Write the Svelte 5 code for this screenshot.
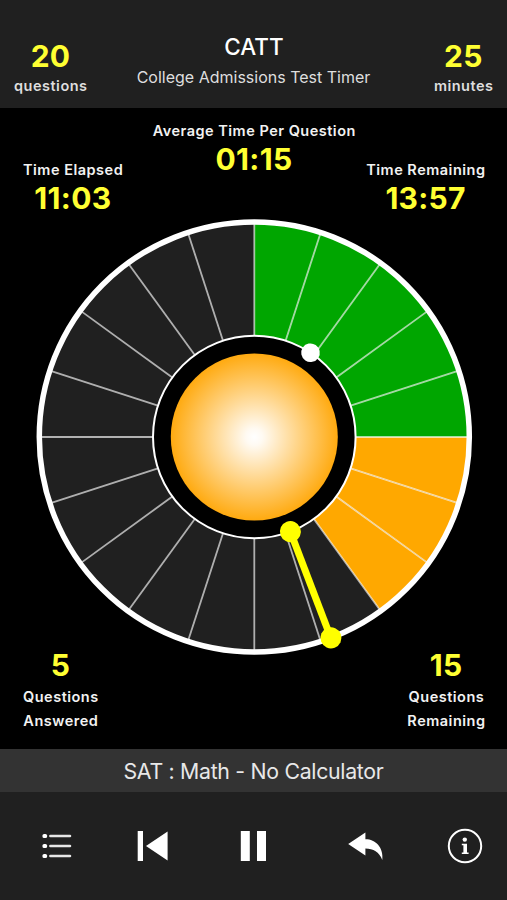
<script lang="ts">
  let totalQuestions: number = 20;
  let totalMinutes: number = 25;
  let answered: number = 5;
  let warned: number = 3;
  let elapsed: number = 663;
  let questionAngle: number = 33.7;
  let section: string = "SAT : Math - No Calculator";

  const outer: number = 215;
  const inner: number = 101.3;

  $: totalSeconds = totalMinutes * 60;
  $: remaining = totalSeconds - elapsed;
  $: perQuestion = totalSeconds / totalQuestions;
  $: handAngle = (elapsed / totalSeconds) * 360;
  $: step = 360 / totalQuestions;
  $: slices = Array.from({ length: totalQuestions }, (_, i) => i);

  function formatTime(s: number): string {
    const min = Math.floor(s / 60);
    const sec = s % 60;
    return (min < 10 ? "0" + min : min) + ":" + (sec < 10 ? "0" + sec : sec);
  }

  function point(r: number, deg: number): string {
    const a = (deg * Math.PI) / 180;
    return (r * Math.sin(a)).toFixed(2) + " " + (-r * Math.cos(a)).toFixed(2);
  }

  function slicePath(from: number, to: number): string {
    return `M${point(inner, from)}L${point(outer, from)}A${outer} ${outer} 0 0 1 ${point(outer, to)}L${point(inner, to)}A${inner} ${inner} 0 0 0 ${point(inner, from)}Z`;
  }

  function sliceType(i: number): string {
    if (i < answered) return "done";
    if (i < answered + warned) return "late";
    return "open";
  }
</script>

<div class="timer-app">
  <header>
    <div class="stat head-stat">
      <span class="number">{totalQuestions}</span>
      <span class="label">questions</span>
    </div>
    <div class="title">
      <h1>CATT</h1>
      <p>College Admissions Test Timer</p>
    </div>
    <div class="stat head-stat">
      <span class="number">{totalMinutes}</span>
      <span class="label">minutes</span>
    </div>
  </header>

  <main>
    <div class="stats times">
      <div class="stat low">
        <span class="label">Time Elapsed</span>
        <span class="number">{formatTime(elapsed)}</span>
      </div>
      <div class="stat">
        <span class="label">Average Time Per Question</span>
        <span class="number">{formatTime(perQuestion)}</span>
      </div>
      <div class="stat low">
        <span class="label">Time Remaining</span>
        <span class="number">{formatTime(remaining)}</span>
      </div>
    </div>

    <svg class="dial" viewBox="-220.3 -220 440 440">
      <defs>
        <radialGradient id="glow">
          <stop offset="0" stop-color="#fff" />
          <stop offset="0.1" stop-color="#fffaf2" />
          <stop offset="1" stop-color="#ffaa10" />
        </radialGradient>
      </defs>
      {#each slices as i}
        <path class={sliceType(i)} d={slicePath(i * step, (i + 1) * step)} />
      {/each}
      {#each slices as i}
        <line class="spoke" y1={-inner} y2={-outer} transform="rotate({i * step})" />
      {/each}
      <circle class="outer-ring" r={outer} />
      <circle class="inner-ring" r={inner} />
      <circle r="83.5" fill="url(#glow)" />
      <circle class="question-dot" cy={-inner} r="9.3" transform="rotate({questionAngle})" />
      <g class="hand" transform="rotate({handAngle})">
        <line y1={-inner} y2={-outer} />
        <circle cy={-inner} r="10.5" />
        <circle cy={-outer} r="10.5" />
      </g>
    </svg>

    <div class="stats counts">
      <div class="stat">
        <span class="number">{answered}</span>
        <span class="label">Questions</span>
        <span class="label">Answered</span>
      </div>
      <div class="stat">
        <span class="number">{totalQuestions - answered}</span>
        <span class="label">Questions</span>
        <span class="label">Remaining</span>
      </div>
    </div>
  </main>

  <div class="section-name">{section}</div>

  <footer>
    <button aria-label="list">
      <svg width="30" height="26" viewBox="0 0 30 26">
        <g fill="#fff">
          <rect x="0.5" y="1" width="4.6" height="4" rx="1.6" />
          <rect x="0.5" y="11" width="4.6" height="4" rx="1.6" />
          <rect x="0.5" y="21" width="4.6" height="4" rx="1.6" />
        </g>
        <path d="M8.4 3H28M8.4 13H28M8.4 23H28" stroke="#e6e6e6" stroke-width="2.6" stroke-linecap="round" />
      </svg>
    </button>
    <button aria-label="restart">
      <svg width="32" height="32" viewBox="0 0 32 32" fill="#fff">
        <path d="M0.7 1H6V31H0.7ZM30.6 1.4V30.6L9 16Z" />
      </svg>
    </button>
    <button aria-label="pause">
      <svg width="26" height="32" viewBox="0 0 26 32" fill="#fff">
        <path d="M0.8 1H9.8V31H0.8ZM17 1H26V31H17Z" />
      </svg>
    </button>
    <button aria-label="undo">
      <svg width="36" height="30" viewBox="0 0 36 30" fill="#fff">
        <path d="M0.2 13L17.4 1.4V8.2C27 8 35.8 16 34.3 29C31 21 25.5 17.6 17.4 17.6V24.6Z" />
      </svg>
    </button>
    <button aria-label="info">
      <svg width="36" height="36" viewBox="0 0 36 36">
        <circle cx="18" cy="18" r="16.2" fill="none" stroke="#fff" stroke-width="2" />
        <circle cx="17.8" cy="11.6" r="2.2" fill="#fff" />
        <path d="M14.8 15.8H20V24.4H21.6V26H14.8V24.4H16.4V17.2H14.8Z" fill="#fff" />
      </svg>
    </button>
  </footer>
</div>

<style>
  :global(body) {
    margin: 0;
    background: #000;
  }

  .timer-app {
    width: 507px;
    height: 900px;
    display: flex;
    flex-direction: column;
    overflow: hidden;
    background: #000;
    color: #f2f2f2;
    font-family: Inter, "Liberation Sans", sans-serif;
    white-space: nowrap;
  }

  header {
    height: 108px;
    box-sizing: border-box;
    padding: 33px 14px 0;
    display: grid;
    grid-template-columns: 1fr auto 1fr;
    align-items: start;
    background: #202020;
  }

  header > :first-child,
  .stats > :first-child {
    justify-self: start;
  }

  header > :last-child,
  .stats > :last-child {
    justify-self: end;
  }

  .title {
    text-align: center;
  }

  h1 {
    margin: 0;
    font-size: 22.5px;
    line-height: 28px;
    font-weight: 500;
    color: #fff;
    padding-left: 1px;
  }

  .title p {
    margin: 6px 0 0;
    font-size: 16px;
    line-height: 20px;
    color: #dedede;
  }

  .stat {
    display: flex;
    flex-direction: column;
    align-items: center;
  }

  .number {
    font-size: 30px;
    line-height: 34px;
    font-weight: 650;
    letter-spacing: 0.3px;
    color: #ffff32;
  }

  .label {
    position: relative;
    top: 1px;
    font-size: 14.5px;
    line-height: 24px;
    font-weight: 600;
    letter-spacing: 0.5px;
    margin-right: -0.5px;
  }

  .head-stat {
    padding-top: 6px;
  }

  .head-stat .label {
    color: #dedede;
  }

  main {
    height: 641px;
    display: flex;
    flex-direction: column;
    align-items: center;
  }

  .stats {
    align-self: stretch;
    display: grid;
    padding: 0 22px 0 23px;
  }

  .times {
    height: 109px;
    box-sizing: border-box;
    padding-top: 10px;
    grid-template-columns: 1fr auto 1fr;
    align-items: start;
  }

  .low {
    padding-top: 39px;
  }

  .dial {
    width: 440px;
    height: 440px;
    flex: none;
  }

  .counts {
    margin-top: -10px;
    grid-template-columns: 1fr 1fr;
  }

  .counts .number {
    line-height: 37px;
  }

  .done {
    fill: #00a600;
  }

  .late {
    fill: #ffa800;
  }

  .open {
    fill: #202020;
  }

  .spoke {
    stroke: rgba(255, 255, 255, 0.65);
    stroke-width: 1.8;
  }

  .outer-ring {
    fill: none;
    stroke: #fff;
    stroke-width: 5.5;
  }

  .inner-ring {
    fill: #000;
    stroke: #fff;
    stroke-width: 2;
  }

  .question-dot {
    fill: #fff;
  }

  .hand {
    fill: #ff0;
    stroke: none;
  }

  .hand line {
    stroke: #ff0;
    stroke-width: 7;
  }

  .section-name {
    height: 43px;
    line-height: 44px;
    font-size: 21.3px;
    letter-spacing: -0.3px;
    text-align: center;
    background: #333;
    color: #e8e8e8;
  }

  footer {
    flex: 1;
    box-sizing: border-box;
    padding-left: 42px;
    display: flex;
    gap: 65px;
    align-items: center;
    background: #202020;
  }

  button {
    padding: 0;
    border: 0;
    background: none;
    display: flex;
  }

  button:nth-child(3) {
    margin-left: 6px;
  }

  button:nth-child(4) {
    margin-left: 17px;
  }

  button:nth-child(5) {
    margin-left: -2px;
  }
</style>
